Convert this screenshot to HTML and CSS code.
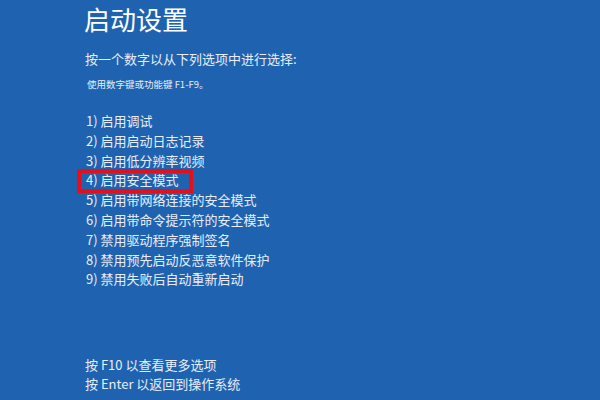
FILE: index.html
```html
<!DOCTYPE html>
<html lang="zh-CN">
<head>
<meta charset="utf-8">
<link rel="stylesheet" href="styles.css">
</head>
<body>
<div class="screen">
  <h1 class="title">启动设置</h1>
  <p class="lead">按一个数字以从下列选项中进行选择:</p>
  <p class="hint">使用数字键或功能键 F1-F9。</p>
  <ol class="options">
    <li>1) 启用调试</li>
    <li>2) 启用启动日志记录</li>
    <li>3) 启用低分辨率视频</li>
    <li class="marked">4) 启用安全模式</li>
    <li>5) 启用带网络连接的安全模式</li>
    <li>6) 启用带命令提示符的安全模式</li>
    <li>7) 禁用驱动程序强制签名</li>
    <li>8) 禁用预先启动反恶意软件保护</li>
    <li>9) 禁用失败后自动重新启动</li>
  </ol>
  <div class="footer">
    <p>按 F10 以查看更多选项</p>
    <p>按 Enter 以返回到操作系统</p>
  </div>
</div>
</body>
</html>
```

FILE: styles.css
```css
html, body {
  margin: 0;
  padding: 0;
}
body {
  width: 600px;
  height: 400px;
  background: #1f63b0;
  color: #e8eef8;
  font-family: "Noto Sans CJK SC", "Noto Sans", sans-serif;
  overflow: hidden;
}
.screen {
  height: 400px;
  box-sizing: border-box;
  padding: 2px 0 0 84px;
  display: flex;
  flex-direction: column;
}
.title {
  margin: 0;
  font-size: 26px;
  line-height: 34px;
  font-weight: 400;
  color: #ffffff;
}
.lead {
  margin: 14px 0 0 1px;
  font-size: 13px;
  line-height: 18px;
}
.hint {
  margin: 10px 0 0 3px;
  font-size: 9.5px;
  line-height: 12px;
}
.options {
  list-style: none;
  margin: 21px 0 0 2px;
  padding: 0;
  font-size: 13px;
  line-height: 19.8px;
}
.options li {
  position: relative;
}
.marked::before {
  content: "";
  position: absolute;
  left: -9px;
  top: -1px;
  width: 108px;
  height: 16px;
  border: 4px solid #e3101c;
}
.footer {
  margin-top: auto;
  padding-bottom: 7px;
  font-size: 13px;
  line-height: 19px;
}
.footer p {
  margin: 0 0 0 1px;
}
```
